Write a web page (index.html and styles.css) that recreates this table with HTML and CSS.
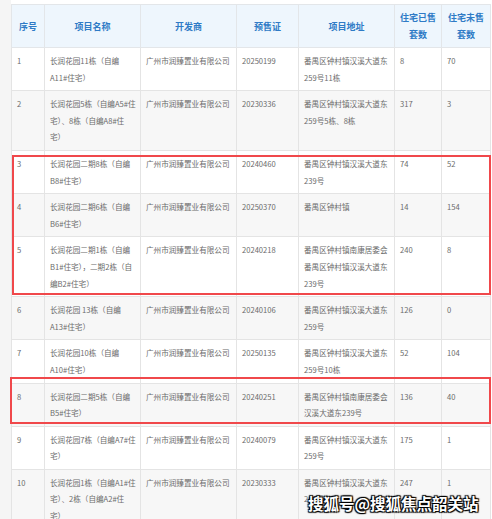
FILE: index.html
```html
<!DOCTYPE html>
<html lang="zh-CN">
<head>
<meta charset="utf-8">
<link rel="stylesheet" href="styles.css">
</head>
<body>
<div class="page">
  <div class="side"></div>
  <div class="main">
    <div class="wrap">
      <table class="sales">
        <colgroup>
          <col class="c-no"><col class="c-name"><col class="c-dev"><col class="c-cert"><col class="c-addr"><col class="c-sold"><col class="c-unsold">
        </colgroup>
        <thead>
          <tr><th>序号</th><th>项目名称</th><th>开发商</th><th>预售证</th><th>项目地址</th><th>住宅已售<br>套数</th><th>住宅未售<br>套数</th></tr>
        </thead>
        <tbody>
          <tr><td>1</td><td>长润花园11栋（自编<br>A11#住宅）</td><td>广州市润臻置业有限公司</td><td>20250199</td><td>番禺区钟村镇汉溪大道东<br>259号11栋</td><td>8</td><td>70</td></tr>
          <tr><td>2</td><td>长润花园5栋（自编A5#住<br>宅）、8栋（自编A8#住<br>宅）</td><td>广州市润臻置业有限公司</td><td>20230336</td><td>番禺区钟村镇汉溪大道东<br>259号5栋、8栋</td><td>317</td><td>3</td></tr>
          <tr><td>3</td><td>长润花园二期8栋（自编<br>B8#住宅）</td><td>广州市润臻置业有限公司</td><td>20240460</td><td>番禺区钟村镇汉溪大道东<br>239号</td><td>74</td><td>52</td></tr>
          <tr><td>4</td><td>长润花园二期6栋（自编<br>B6#住宅）</td><td>广州市润臻置业有限公司</td><td>20250370</td><td>番禺区钟村镇</td><td>14</td><td>154</td></tr>
          <tr><td>5</td><td>长润花园二期1栋（自编<br>B1#住宅），二期2栋（自<br>编B2#住宅）</td><td>广州市润臻置业有限公司</td><td>20240218</td><td>番禺区钟村镇南康居委会<br>番禺区钟村镇汉溪大道东<br>239号</td><td>240</td><td>8</td></tr>
          <tr><td>6</td><td>长润花园 13栋（自编<br>A13#住宅）</td><td>广州市润臻置业有限公司</td><td>20240106</td><td>番禺区钟村镇汉溪大道东<br>259号</td><td>126</td><td>0</td></tr>
          <tr><td>7</td><td>长润花园10栋（自编<br>A10#住宅）</td><td>广州市润臻置业有限公司</td><td>20250135</td><td>番禺区钟村镇汉溪大道东<br>259号10栋</td><td>52</td><td>104</td></tr>
          <tr><td>8</td><td>长润花园二期5栋（自编<br>B5#住宅）</td><td>广州市润臻置业有限公司</td><td>20240251</td><td>番禺区钟村镇南康居委会<br>汉溪大道东239号</td><td>136</td><td>40</td></tr>
          <tr><td>9</td><td>长润花园7栋（自编A7#住<br>宅）</td><td>广州市润臻置业有限公司</td><td>20240079</td><td>番禺区钟村镇汉溪大道东<br>259号</td><td>175</td><td>1</td></tr>
          <tr><td>10</td><td>长润花园1栋（自编A1#住<br>宅）、2栋（自编A2#住<br>宅）</td><td>广州市润臻置业有限公司</td><td>20230333</td><td>番禺区钟村镇汉溪大道东<br>259号</td><td>247</td><td>1</td></tr>
        </tbody>
      </table>
      <div class="mark mark-a"></div>
      <div class="mark mark-b"></div>
    </div>
  </div>
</div>
<div class="watermark">搜狐号@搜狐焦点韶关站</div>
</body>
</html>
```

FILE: styles.css
```css
html, body {
  margin: 0;
  padding: 0;
  background: #ffffff;
  height: 519px;
  overflow: hidden;
}
body {
  font-family: "Noto Sans CJK SC", "Noto Sans", sans-serif;
  position: relative;
}
.page {
  display: flex;
  height: 519px;
}
.side {
  width: 11px;
  flex: none;
  background: #f5f5f5;
}
.main {
  padding-top: 4px;
}
.wrap {
  position: relative;
}
.sales {
  border-collapse: collapse;
  table-layout: fixed;
  width: 479px;
}
.c-no { width: 33px; }
.c-name { width: 96px; }
.c-dev { width: 96px; }
.c-cert { width: 62px; }
.c-addr { width: 96px; }
.c-sold { width: 47px; }
.c-unsold { width: 49px; }

.sales th {
  background: #eef6fd;
  color: #2f7bc6;
  font-size: 9px;
  font-weight: 700;
  line-height: 17px;
  height: 42px;
  padding: 0 2px;
  text-align: center;
  vertical-align: middle;
  border: 1px solid #e3e6e9;
  white-space: nowrap;
}
.sales td {
  font-size: 7.6px;
  color: #6b6b6b;
  line-height: 16.6px;
  padding: 5px 4px 4px 5px;
  vertical-align: top;
  text-align: left;
  border: 1px solid #e4e4e4;
  white-space: nowrap;
  overflow: hidden;
}
.sales tbody tr:nth-child(even) td {
  background: #f7f7f7;
}
.mark {
  position: absolute;
  border: 2px solid #f0484b;
  box-sizing: border-box;
  pointer-events: none;
}
.mark-a {
  left: 1px;
  top: 151px;
  width: 479px;
  height: 140px;
}
.mark-b {
  left: -1px;
  top: 373px;
  width: 481px;
  height: 47px;
}
.watermark {
  position: absolute;
  left: 308px;
  top: 492px;
  font-size: 15.5px;
  font-weight: 700;
  color: #ffffff;
  letter-spacing: 0;
  white-space: nowrap;
  text-shadow: 0 0 1px #000, 1px 1px 1px #000, -1px -1px 1px #000, 1px -1px 1px #000, -1px 1px 1px #000;
}
```
